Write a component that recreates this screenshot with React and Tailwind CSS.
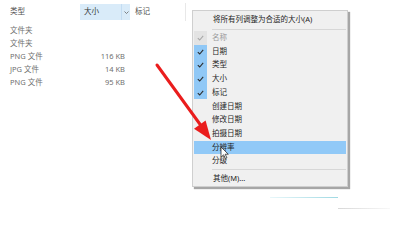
import React from "react";

const Check = ({ color = "#2b2b2b" }) => (
  <svg width="7" height="6" viewBox="0 0 7 6">
    <path d="M0.8 3.2 L2.7 5 L6.2 0.9" fill="none" stroke={color} strokeWidth="1.1" />
  </svg>
);

const items = [
  { t: "名称", c: "grey" },
  { t: "日期", c: "on" },
  { t: "类型", c: "on" },
  { t: "大小", c: "on" },
  { t: "标记", c: "on" },
  { t: "创建日期" },
  { t: "修改日期" },
  { t: "拍摄日期" },
  { t: "分辨率", hl: true },
  { t: "分级" },
];

const rows = [
  ["文件夹", ""],
  ["文件夹", ""],
  ["PNG 文件", "116 KB"],
  ["JPG 文件", "14 KB"],
  ["PNG 文件", "95 KB"],
];

export default function App() {
  return (
    <div className="relative w-[400px] h-[230px] overflow-hidden bg-white font-['Noto_Sans','Noto_Sans_CJK_SC',sans-serif] text-[7.5px] leading-none">
      {/* file list */}
      <div className="flex flex-col pt-[4px]">
        <div className="flex h-[16px] items-center text-[#4f4f4f]">
          <div className="w-[80px] pl-[10px]">类型</div>
          <div className="flex h-full w-[50px] items-center bg-[#d9ebf9]">
            <div className="flex-1 pl-[4px] text-[#333]">大小</div>
            <div className="h-full w-px bg-[#c3dcf2]" />
            <div className="flex w-[8px] items-center justify-center">
              <svg width="5" height="3" viewBox="0 0 5 3">
                <path d="M0.5 0.5 L2.5 2.5 L4.5 0.5" fill="none" stroke="#666" strokeWidth="0.8" />
              </svg>
            </div>
          </div>
          <div className="w-[55px] pl-[5px]">标记</div>
          <div className="h-[18px] w-px bg-[#e8e8e8]" />
        </div>
        <div className="mt-[4.5px] flex flex-col text-[#707070]">
          {rows.map(([a, b], i) => (
            <div key={i} className="flex h-[13px] items-center">
              <div className="w-[80px] pl-[10px]">{a}</div>
              <div className="w-[45px] text-right">{b}</div>
            </div>
          ))}
        </div>
      </div>

      {/* faint background lines */}
      <div className="absolute left-[270px] top-[197px] h-px w-[68px] bg-gradient-to-r from-[#e8f7fa] to-[#9fd9e3]" />
      <div className="absolute left-[338px] top-[208px] h-px w-[52px] bg-gradient-to-r from-[#d8d8d8] to-[#f8f8f8]" />

      {/* context menu */}
      <div className="absolute left-[192px] top-[10px] w-[156px] border border-[#cfcfcf] bg-[#f0f0f0] py-px text-[#1e1e1e] shadow-[2px_2px_1px_rgba(0,0,0,0.35)]">
        <div className="flex h-[16px] items-center pl-[20px]">将所有列调整为合适的大小(A)</div>
        <div className="flex h-[3px] items-center pl-[19px] pr-px">
          <div className="h-px flex-1 bg-[#d7d7d7]" />
        </div>
        {items.map((it, i) => (
          <div
            key={i}
            className={
              "mx-px flex h-[13.7px] items-center " + (it.hl ? "bg-[#91c9f7]" : "")
            }
          >
            <div
              className={
                "flex h-full w-[13px] items-center justify-center " +
                (it.c === "on" ? "bg-[#90c8f6]" : it.c === "grey" ? "bg-[#e3e3e3]" : "")
              }
            >
              {it.c === "on" && <Check />}
              {it.c === "grey" && <Check color="#a8a8a8" />}
            </div>
            <div className={"pl-[5px] " + (it.c === "grey" ? "text-[#9b9b9b]" : "")}>{it.t}</div>
          </div>
        ))}
        <div className="flex h-[4px] items-center pl-[19px] pr-px">
          <div className="h-px flex-1 bg-[#d7d7d7]" />
        </div>
        <div className="flex h-[13px] items-center pl-[20px]">其他(M)...</div>
      </div>

      {/* red arrow + cursor overlay */}
      <svg className="pointer-events-none absolute left-0 top-0" width="400" height="230" viewBox="0 0 400 230">
        <line x1="157" y1="65" x2="202" y2="127" stroke="#ea1d1d" strokeWidth="3" strokeLinecap="round" />
        <polygon points="211,140 194,128.7 205.6,120.5" fill="#ea1d1d" />
        <g transform="translate(221 147) scale(0.85)">
          <path
            d="M0 0 L0 12 L3 9.2 L5.2 13.6 L7 12.8 L4.9 8.5 L8.6 8.5 Z"
            fill="#ffffff"
            stroke="#222"
            strokeWidth="0.9"
            strokeLinejoin="round"
          />
        </g>
      </svg>
    </div>
  );
}
